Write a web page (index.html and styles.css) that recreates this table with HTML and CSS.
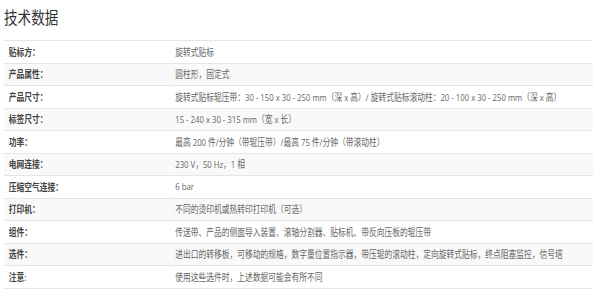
FILE: index.html
```html
<!DOCTYPE html>
<html lang="zh">
<head>
<meta charset="utf-8">
<link rel="stylesheet" href="styles.css">
</head>
<body>
<div class="frame">
  <div class="page">
    <h2 class="title">技术数据</h2>
    <table class="specs">
      <tbody>
        <tr><th>贴标方：</th><td>旋转式贴标</td></tr>
        <tr><th>产品属性：</th><td>圆柱形，固定式</td></tr>
        <tr><th>产品尺寸：</th><td>旋转式贴标辊压带：30 - 150 x 30 - 250 mm（深 x 高）/ 旋转式贴标滚动柱：20 - 100 x 30 - 250 mm（深 x 高）</td></tr>
        <tr><th>标签尺寸：</th><td>15 - 240 x 30 - 315 mm（宽 x 长）</td></tr>
        <tr><th>功率：</th><td>最高 200 件/分钟（带辊压带）/最高 75 件/分钟（带滚动柱）</td></tr>
        <tr><th>电网连接：</th><td>230 V，50 Hz，1 相</td></tr>
        <tr><th>压缩空气连接：</th><td>6 bar</td></tr>
        <tr><th>打印机：</th><td>不同的烫印机或热转印打印机（可选）</td></tr>
        <tr><th>组件：</th><td>传送带、产品的侧面导入装置、滚轴分割器、贴标机、带反向压板的辊压带</td></tr>
        <tr><th>选件：</th><td>进出口的转移板，可移动的规格，数字量位置指示器，带压辊的滚动柱，定向旋转式贴标，终点阻塞监控，信号塔</td></tr>
        <tr><th>注意:</th><td>使用这些选件时，上述数据可能会有所不同</td></tr>
      </tbody>
    </table>
  </div>
</div>
</body>
</html>
```

FILE: styles.css
```css
html, body {
  margin: 0;
  padding: 0;
  background: #fff;
  overflow: hidden;
}
.frame {
  width: 600px;
  overflow: hidden;
}
/* the reference is rendered horizontally condensed */
.page {
  width: 745px;
  box-sizing: border-box;
  padding: 6px 4px 0 5px;
  font-family: "Open Sans", "Noto Sans CJK SC", sans-serif;
  color: #666;
  transform: scaleX(0.8);
  transform-origin: 0 0;
}
.title {
  margin: 0 0 10px 0;
  font-size: 17px;
  font-weight: 400;
  line-height: 24px;
  color: #333;
}
.specs {
  width: 100%;
  border-collapse: collapse;
  font-size: 9.7px;
}
.specs tr {
  border-top: 1px solid #e5e5e5;
  border-bottom: 1px solid #e5e5e5;
}
.specs tr:nth-child(even) {
  background: #f9f9f9;
}
.specs th {
  width: 196px;
  text-align: left;
  font-weight: 600;
  color: #444;
  padding: 0 6px;
  height: 21.5px;
}
.specs td {
  padding: 0 6px;
  height: 21.5px;
  color: #666;
}
```
